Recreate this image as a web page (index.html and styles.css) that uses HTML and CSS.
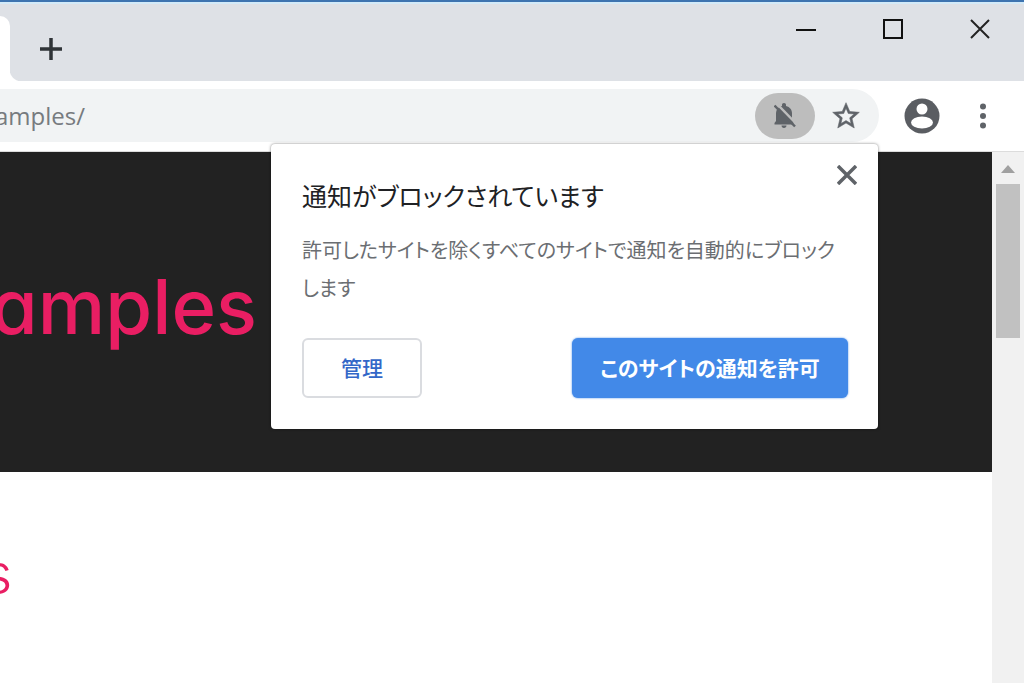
FILE: index.html
```html
<!DOCTYPE html>
<html lang="ja">
<head>
    <title>amples</title>
    <meta charset="UTF-8">
    <meta name="viewport" content="width=device-width, initial-scale=1.0">
    <link rel="stylesheet" href="styles.css">
</head>
<body>
    <div class="tab-strip">
        <div class="tab"></div>
        <div class="strip">
            <button class="new-tab" aria-label="New tab">
                <svg width="24" height="24" viewBox="0 0 24 24"><path d="M12 1v22M1 12h22" stroke="#2f3337" stroke-width="3.500" fill="none"/></svg>
            </button>
            <div class="window-buttons">
                <button aria-label="Minimize">
                    <svg width="20" height="20" viewBox="0 0 20 20"><path d="M0 11h20" stroke="#111" stroke-width="2"/></svg>
                </button>
                <button aria-label="Maximize">
                    <svg width="20" height="20" viewBox="0 0 20 20"><rect x="1" y="1" width="18" height="18" fill="none" stroke="#111" stroke-width="2"/></svg>
                </button>
                <button aria-label="Close window">
                    <svg width="20" height="20" viewBox="0 0 20 20"><path d="M1 1l18 18M19 1L1 19" stroke="#222" stroke-width="2"/></svg>
                </button>
            </div>
        </div>
    </div>

    <div class="toolbar">
        <div class="address-bar">
            <span class="url"><span>amples/</span></span>
            <button class="blocked" aria-label="Notifications blocked">
                <svg width="22" height="26" viewBox="0 0 22 26">
                    <path d="M10 0c1.300 0 2 .9 2 2v1c4 1 6 4 6 7.500V17l1.500 2v2.500H.5V20L2 18v-7.500C2 7 4 4 8 3V2c0-1.100.7-2 2-2zM7.500 22.500h5c0 1.500-1 2.500-2.500 2.500s-2.500-1-2.500-2.500z" fill="#5f6368"/>
                    <path d="M2 0l20 20.500" stroke="#bdbdbd" stroke-width="2.500"/>
                    <path d="M.5 2.500l20.500 21" stroke="#5f6368" stroke-width="2.500"/>
                </svg>
            </button>
            <button class="star" aria-label="Bookmark">
                <svg width="32" height="32" viewBox="0 0 24 24"><path d="M22 9.240l-7.190-.62L12 2 9.190 8.630 2 9.240l5.460 4.730L5.820 21 12 17.270 18.180 21l-1.630-7.030L22 9.240zM12 15.400l-3.760 2.270 1-4.280-3.320-2.880 4.380-.38L12 6.100l1.710 4.040 4.380.38-3.320 2.880 1 4.280L12 15.400z" fill="#5f6368" stroke="#5f6368" stroke-width=".4"/></svg>
            </button>
        </div>
        <button class="profile" aria-label="Profile">
            <svg width="36" height="36" viewBox="0 0 36 36">
                <circle cx="18" cy="18" r="17.500" fill="#5a5d62"/>
                <circle cx="18" cy="11" r="5.500" fill="#fff"/>
                <ellipse cx="18" cy="24.500" rx="11" ry="6" fill="#fff"/>
            </svg>
        </button>
        <button class="menu" aria-label="Menu">
            <svg width="24" height="28" viewBox="0 0 24 28" fill="#5f6368"><circle cx="12" cy="4.500" r="3"/><circle cx="12" cy="14" r="3"/><circle cx="12" cy="23.500" r="3"/></svg>
        </button>
    </div>

    <div class="page">
        <div class="content">
            <header class="banner"><h1>amples</h1></header>
            <h2>s</h2>
        </div>
        <div class="scrollbar">
            <svg class="arrow" width="14" height="8" viewBox="0 0 14 8"><path d="M0 8l7-8 7 8z" fill="#a0a0a0"/></svg>
            <div class="thumb"></div>
        </div>
    </div>

    <div class="popup" role="dialog" aria-labelledby="popup-title">
        <button class="close" aria-label="Close">
            <svg width="20" height="20" viewBox="0 0 20 20"><path d="M1 1l18 18M19 1L1 19" stroke="#5f6368" stroke-width="3.500"/></svg>
        </button>
        <div class="popup-title" id="popup-title">通知がブロックされています</div>
        <p>許可したサイトを除くすべてのサイトで通知を自動的にブロックします</p>
        <div class="actions">
            <button class="manage">管理</button>
            <button class="allow">このサイトの通知を許可</button>
        </div>
    </div>
</body>
</html>
```

FILE: styles.css
```css
* {
    box-sizing: border-box;
}

body {
    font-family: "Open Sans", "Noto Sans CJK JP", sans-serif;
    background-color: #fff;
    margin: 0;
    height: 100vh;
    display: flex;
    flex-direction: column;
    overflow: hidden;
    position: relative;
}

button {
    font-family: inherit;
    background: none;
    border: none;
    margin: 0;
    padding: 0;
    display: flex;
    align-items: center;
    justify-content: center;
    cursor: pointer;
}

/* tabs */
.tab-strip {
    display: flex;
    height: 81px;
    flex-shrink: 0;
    border-top: 2px solid #3e74b0;
    background-color: #dee1e6;
    box-shadow: inset 0 2px 0 #d3eaf8;
}

.tab {
    width: 10px;
    margin-top: 14px;
    background-color: #fff;
    border-top-right-radius: 12px;
}

.strip {
    flex: 1;
    display: flex;
    justify-content: space-between;
    align-items: flex-start;
    padding: 17px 34px 0 29px;
    background: radial-gradient(circle at 100% 0, #dee1e6 12px, #fff 13px) 0 100% / 12px 12px no-repeat;
}

.new-tab {
    margin-top: 18px;
}

.window-buttons {
    display: flex;
    gap: 67px;
}

/* toolbar */
.toolbar {
    display: flex;
    align-items: center;
    height: 71px;
    flex-shrink: 0;
    padding: 0 29px 1px 0;
    border-bottom: 1px solid #dcdcdc;
}

.address-bar {
    flex: 1;
    display: flex;
    align-items: center;
    height: 53px;
    padding-right: 17px;
    background-color: #f1f3f4;
    border-radius: 0 27px 27px 0;
}

.url {
    width: 85px;
    display: flex;
    justify-content: flex-end;
    margin-right: auto;
    font-size: 24px;
    color: #777b7f;
}

.blocked {
    width: 60px;
    height: 46px;
    border-radius: 23px;
    background-color: #bdbdbd;
}

.star {
    margin-left: 15px;
}

.profile {
    margin-left: 25px;
}

.menu {
    margin-left: 31px;
}

/* page */
.page {
    flex: 1;
    display: flex;
    min-height: 0;
}

.content {
    flex: 1;
    min-width: 0;
}

.banner {
    background-color: #222;
    height: 320px;
    display: flex;
    align-items: center;
    padding-bottom: 12px;
}

h1, h2 {
    font-family: Inter, sans-serif;
    font-feature-settings: "cv11";
    color: #e91e63;
    margin: 0;
    display: flex;
    justify-content: flex-end;
}

h1 {
    width: 257px;
    font-size: 76px;
    font-weight: 500;
}

h2 {
    width: 12px;
    margin-top: 69px;
    font-size: 54px;
    line-height: 66px;
    font-weight: 300;
}

.scrollbar {
    width: 32px;
    background-color: #f1f1f1;
    padding: 13px 4px 0 4px;
}

.arrow {
    display: block;
    margin: 0 auto 11px;
}

.thumb {
    height: 154px;
    background-color: #c1c1c1;
}

/* popup */
.popup {
    position: absolute;
    top: 144px;
    right: 146px;
    width: 607px;
    padding: 29px 30px 31px 31px;
    background-color: #fff;
    border-radius: 4px;
    box-shadow: 0 0 3px rgba(0,0,0,0.5);
    font-family: "Noto Sans CJK JP", sans-serif;
    font-feature-settings: "palt";
}

.close {
    position: absolute;
    top: 21px;
    right: 21px;
}

.popup-title {
    font-size: 25px;
    line-height: 44px;
    color: #202124;
}

.popup p {
    margin: 14px 0 31px;
    font-size: 20px;
    line-height: 38px;
    color: #6b6e72;
}

.actions {
    display: flex;
    justify-content: space-between;
}

.actions button {
    height: 60px;
    padding-bottom: 2px;
    border-radius: 6px;
    font-size: 21px;
    font-weight: 500;
    font-feature-settings: "palt";
}

.manage {
    width: 120px;
    border: 2px solid #dadce0;
    color: #3367c8;
}

.allow {
    width: 276px;
    background-color: #4289e8;
    box-shadow: 0 0 2px #4289e8;
    color: #fff;
}

.actions .allow {
    font-weight: 700;
}
```
